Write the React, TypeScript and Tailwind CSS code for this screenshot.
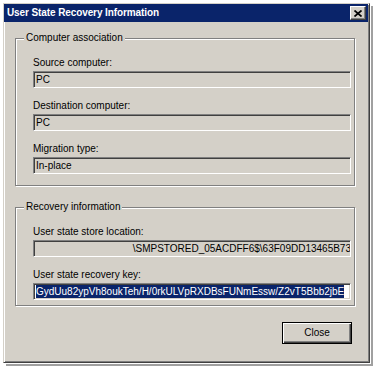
import type { ReactNode } from 'react';

const sunken =
  'h-[17px] border border-t-[#808080] border-l-[#808080] border-r-white border-b-white shadow-[inset_1px_1px_0_#404040,inset_-1px_-1px_0_#d4d0c8] overflow-hidden whitespace-nowrap leading-[15px] px-[2px]';

const Field = ({ label, children, boxClass }: { label: string; children: ReactNode; boxClass: string }) => (
  <div className="flex flex-col">
    <div className="h-[12px] leading-[12px]">{label}</div>
    <div className={`mt-[2px] w-[318px] ${sunken} ${boxClass}`}>{children}</div>
  </div>
);

const Group = ({ title, height, children }: { title: string; height: string; children: ReactNode }) => (
  <div
    className={`relative ml-[11px] w-[340px] ${height} border border-[#808080] shadow-[1px_1px_0_#fff,inset_1px_1px_0_#fff] pt-[18px] pl-[17px] flex flex-col gap-[12px]`}
  >
    <span className="absolute left-[8px] top-[-7px] bg-[#d4d0c8] px-[2px] leading-[12px]">{title}</span>
    {children}
  </div>
);

export default function App() {
  return (
    <div className="w-[375px] h-[369px] bg-white overflow-hidden pt-[3px] pl-[3px] font-['Liberation_Sans',Arial,sans-serif] text-[10px] text-black">
      <div className="w-[367px] h-[360px] flex flex-col bg-[#d4d0c8] border border-t-[#d4d0c8] border-l-[#d4d0c8] border-r-[#404040] border-b-[#404040] shadow-[inset_1px_1px_0_#fff,inset_-1px_-1px_0_#808080,1px_1px_0_#fff,3px_3px_0_#a0a0a0]">
        {/* title bar */}
        <div className="h-[18px] mr-[1px] bg-[#0a246a] flex items-center justify-between pl-[3px] pr-[2px]">
          <span className="text-white font-bold text-[10px] tracking-[-0.1px] leading-[18px]">User State Recovery Information</span>
          <button className="w-[16px] h-[14px] flex items-center justify-center bg-[#d4d0c8] border border-t-white border-l-white border-r-[#404040] border-b-[#404040] shadow-[inset_-1px_-1px_0_#808080]">
            <svg width="8" height="7" viewBox="0 0 8 7">
              <path d="M0.5 0.5l7 6M7.5 0.5l-7 6" stroke="#000" strokeWidth="1.7" fill="none" />
            </svg>
          </button>
        </div>

        <div className="mt-[16px]">
          <Group title="Computer association" height="h-[148px]">
            <Field label="Source computer:" boxClass="bg-[#d4d0c8]">PC</Field>
            <Field label="Destination computer:" boxClass="bg-[#d4d0c8]">PC</Field>
            <Field label="Migration type:" boxClass="bg-[#d4d0c8]">In-place</Field>
          </Group>
        </div>

        <div className="mt-[21px]">
          <Group title="Recovery information" height="h-[99px]">
            <Field label="User state store location:" boxClass="bg-[#d4d0c8] flex justify-end">
              <span className="mr-[-3px]">\SMPSTORED_05ACDFF6$\63F09DD13465B73</span>
            </Field>
            <Field label="User state recovery key:" boxClass="bg-white">
              <span className="bg-[#0a246a] text-white leading-[13px] inline-block">
                GydUu82ypVh8oukTeh/H/0rkULVpRXDBsFUNmEssw/Z2vT5Bbb2jbE
              </span>
            </Field>
          </Group>
        </div>

        <div className="mt-[16px] flex justify-end pr-[17px]">
          <button className="w-[70px] h-[22px] border border-black bg-[#d4d0c8] shadow-[inset_1px_1px_0_#fff,inset_-1px_-1px_0_#404040,inset_-2px_-2px_0_#808080] text-[10px] leading-[20px]">
            Close
          </button>
        </div>
      </div>
    </div>
  );
}
